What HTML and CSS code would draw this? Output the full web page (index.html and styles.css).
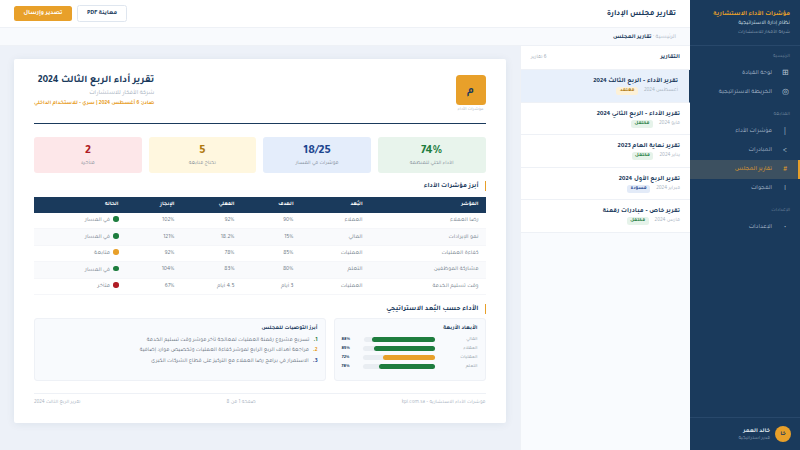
FILE: index.html
```html
<!DOCTYPE html>
<html lang="ar" dir="rtl">
<head>
<meta charset="utf-8">
<title>تقارير مجلس الإدارة</title>
<link rel="stylesheet" href="styles.css">
</head>
<body>
<div class="app">
  <aside class="sidebar">
    <div class="brand">
      <div class="brand-title">مؤشرات الأداء الاستشارية</div>
      <div class="brand-sub">نظام إدارة الاستراتيجية</div>
      <div class="brand-org">شركة الأفكار للاستشارات</div>
    </div>
    <nav class="nav">
      <div class="nav-label">الرئيسية</div>
      <a class="nav-item"><span class="nav-icon">⊞</span>لوحة القيادة</a>
      <a class="nav-item"><span class="nav-icon">◎</span>الخريطة الاستراتيجية</a>
      <div class="nav-label">المتابعة</div>
      <a class="nav-item"><span class="nav-icon">|</span>مؤشرات الأداء</a>
      <a class="nav-item"><span class="nav-icon">&lt;</span>المبادرات</a>
      <a class="nav-item active"><span class="nav-icon">#</span>تقارير المجلس</a>
      <a class="nav-item"><span class="nav-icon">!</span>الفجوات</a>
      <div class="nav-label">الإعدادات</div>
      <a class="nav-item"><span class="nav-icon">•</span>الإعدادات</a>
    </nav>
    <div class="user">
      <div class="avatar">خا</div>
      <div>
        <div class="user-name">خالد العمر</div>
        <div class="user-role">مدير استراتيجية</div>
      </div>
    </div>
  </aside>

  <div class="workspace">
    <header class="topbar">
      <h1 class="page-title">تقارير مجلس الإدارة</h1>
      <div class="actions">
        <button class="btn btn-ghost">معاينة PDF</button>
        <button class="btn btn-gold">تصدير وإرسال</button>
      </div>
    </header>
    <div class="crumbs"><span class="crumb-muted">الرئيسية · </span><b>تقارير المجلس</b></div>

    <div class="columns">
      <section class="list">
        <div class="list-head"><b>التقارير</b><span>6 تقارير</span></div>
        <article class="report selected">
          <div class="report-title">تقرير الأداء – الربع الثالث 2024</div>
          <div class="report-meta"><span>أغسطس 2024</span><i class="tag tag-gold">معتمد</i></div>
        </article>
        <article class="report">
          <div class="report-title">تقرير الأداء – الربع الثاني 2024</div>
          <div class="report-meta"><span>مايو 2024</span><i class="tag tag-green">مكتمل</i></div>
        </article>
        <article class="report">
          <div class="report-title">تقرير نهاية العام 2023</div>
          <div class="report-meta"><span>يناير 2024</span><i class="tag tag-green">مكتمل</i></div>
        </article>
        <article class="report">
          <div class="report-title">تقرير الربع الأول 2024</div>
          <div class="report-meta"><span>فبراير 2024</span><i class="tag tag-blue">مسودة</i></div>
        </article>
        <article class="report">
          <div class="report-title">تقرير خاص – مبادرات رقمنة</div>
          <div class="report-meta"><span>مارس 2024</span><i class="tag tag-green">مكتمل</i></div>
        </article>
      </section>

      <main class="stage">
        <div class="paper">
          <div class="paper-head">
            <div class="logo-wrap">
              <div class="logo">م</div>
              <div class="logo-cap">مؤشرات الأداء</div>
            </div>
            <div class="paper-info">
              <h2 class="paper-title">تقرير أداء الربع الثالث 2024</h2>
              <div class="paper-org">شركة الأفكار للاستشارات</div>
              <div class="paper-date">صادر: 6 أغسطس 2024 | سري - للاستخدام الداخلي</div>
            </div>
          </div>

          <div class="kpis">
            <div class="kpi kpi-green"><strong>74%</strong><span>الأداء الكلي للمنظمة</span></div>
            <div class="kpi kpi-blue"><strong>18/25</strong><span>مؤشرات في المسار</span></div>
            <div class="kpi kpi-yellow"><strong>5</strong><span>تحتاج متابعة</span></div>
            <div class="kpi kpi-red"><strong>2</strong><span>متأخرة</span></div>
          </div>

          <h3 class="section-title">أبرز مؤشرات الأداء</h3>
          <table class="table">
            <colgroup><col class="c1"><col class="c2"><col class="c3"><col class="c4"><col class="c5"><col class="c6"></colgroup>
            <thead><tr><th>المؤشر</th><th>البُعد</th><th>الهدف</th><th>الفعلي</th><th>الإنجاز</th><th>الحالة</th></tr></thead>
            <tbody>
              <tr><td>رضا العملاء</td><td>العملاء</td><td>90%</td><td>92%</td><td>102%</td><td><i class="dot dot-green"></i>في المسار</td></tr>
              <tr><td>نمو الإيرادات</td><td>المالي</td><td>15%</td><td>18.2%</td><td>121%</td><td><i class="dot dot-green"></i>في المسار</td></tr>
              <tr><td>كفاءة العمليات</td><td>العمليات</td><td>85%</td><td>78%</td><td>92%</td><td><i class="dot dot-gold"></i>متابعة</td></tr>
              <tr><td>مشاركة الموظفين</td><td>التعلم</td><td>80%</td><td>83%</td><td>104%</td><td><i class="dot dot-green"></i>في المسار</td></tr>
              <tr><td>وقت تسليم الخدمة</td><td>العمليات</td><td>3 أيام</td><td>4.5 أيام</td><td>67%</td><td><i class="dot dot-red"></i>متأخر</td></tr>
            </tbody>
          </table>

          <h3 class="section-title second">الأداء حسب البُعد الاستراتيجي</h3>
          <div class="panels">
            <div class="panel panel-bars">
              <h4>الأبعاد الأربعة</h4>
              <div class="bar-row"><span class="bar-name">المالي</span><div class="track"><div class="fill fill-green" style="width:88%"></div></div><b>88%</b></div>
              <div class="bar-row"><span class="bar-name">العملاء</span><div class="track"><div class="fill fill-green" style="width:85%"></div></div><b>85%</b></div>
              <div class="bar-row"><span class="bar-name">العمليات</span><div class="track"><div class="fill fill-gold" style="width:72%"></div></div><b>72%</b></div>
              <div class="bar-row"><span class="bar-name">التعلم</span><div class="track"><div class="fill fill-green" style="width:78%"></div></div><b>78%</b></div>
            </div>
            <div class="panel panel-recs">
              <h4>أبرز التوصيات للمجلس</h4>
              <div class="rec"><b class="n-green">1.</b><span>تسريع مشروع رقمنة العمليات لمعالجة تأخر مؤشر وقت تسليم الخدمة</span></div>
              <div class="rec"><b class="n-gold">2.</b><span>مراجعة أهداف الربع الرابع لمؤشر كفاءة العمليات وتخصيص موارد إضافية</span></div>
              <div class="rec"><b class="n-navy">3.</b><span>الاستمرار في برامج رضا العملاء مع التركيز على قطاع الشركات الكبرى</span></div>
            </div>
          </div>

          <div class="paper-foot">
            <span>مؤشرات الأداء الاستشارية – kpi.com.sa</span>
            <span>صفحة 1 من 8</span>
            <span>تقرير الربع الثالث 2024</span>
          </div>
        </div>
      </main>
    </div>
  </div>
</div>
</body>
</html>
```
FILE: styles.css
```css
* { box-sizing: border-box; margin: 0; padding: 0; }
html, body { width: 800px; height: 450px; overflow: hidden; }
body { font-family: "Tajawal", "Noto Sans", sans-serif; color: #1a3a5c; background: #edf1f8; }
.app { display: flex; width: 800px; height: 450px; }

.sidebar { width: 110px; flex: none; background: #1a3a5c; display: flex; flex-direction: column; color: #a9b9cb; }
.brand { height: 46px; padding: 8.5px 10px 0; border-bottom: 1px solid #28486b; }
.brand-title { font-size: 6.5px; line-height: 10px; font-weight: 700; color: #e8a02a; }
.brand-sub { font-size: 5.6px; line-height: 9.5px; color: #dfe6ee; }
.brand-org { font-size: 5px; line-height: 9px; color: #8fa3b9; }
.nav { flex: 1; display: flex; flex-direction: column; }
.nav-label { font-size: 5px; height: 14px; line-height: 14px; padding: 0 10px; color: #71889f; margin-top: 4px; }
.nav-item + .nav-label { margin-top: 6px; }
.nav-item { height: 19px; display: flex; align-items: center; gap: 8px; padding: 0 10px 0 0; font-size: 6.25px; color: #a9b9cb; }
.nav-icon { width: 10px; text-align: center; font-size: 7.5px; color: #b6c4d3; direction: ltr; unicode-bidi: isolate; }
.active { background: #3c5060; color: #e8a02a; border-right: 2px solid #e8a02a; padding-right: 8px; }
.active .nav-icon { color: #e8a02a; }
.user { height: 33px; border-top: 1px solid #28486b; display: flex; align-items: center; gap: 5px; padding: 0 9px; }
.avatar { width: 16px; height: 16px; border-radius: 50%; background: #e8a02a; color: #1a3a5c; font-size: 6px; font-weight: 700; display: flex; align-items: center; justify-content: center; }
.user-name { font-size: 6px; line-height: 8px; font-weight: 700; color: #dfe6ee; }
.user-role { font-size: 5px; line-height: 7px; color: #8fa3b9; }

.workspace { flex: 1; display: flex; flex-direction: column; min-width: 0; }
.topbar { height: 28px; background: #fff; border-bottom: 1px solid #eef1f6; display: flex; align-items: center; justify-content: space-between; padding: 0 14px; }
.page-title { font-size: 8px; font-weight: 700; color: #1a3a5c; }
.actions { display: flex; align-items: center; gap: 5px; }
.btn { font-family: inherit; font-size: 6.25px; font-weight: 700; border-radius: 2.5px; display: flex; align-items: center; justify-content: center; }
.btn-ghost { width: 50px; height: 17px; background: #fff; border: 1px solid #dfe6ef; color: #1a3a5c; }
.btn-gold { width: 58px; height: 15px; background: #e8a02a; border: 0; color: #fff; }
.crumbs { height: 18px; background: #f8fafd; border-bottom: 1px solid #eef1f6; padding: 2px 14px 0; display: flex; align-items: center; font-size: 6px; color: #1a3a5c; }
.crumbs b { font-weight: 700; }
.crumb-muted { color: #a5b0bd; white-space: pre; }

.columns { flex: 1; display: flex; min-height: 0; }
.list { width: 170px; flex: none; background: #f9fbfe; border-left: 1px solid #eef1f6; }
.list-head { height: 24px; background: #fff; border-bottom: 1px solid #eef1f6; display: flex; align-items: center; justify-content: space-between; padding: 0 10px; font-size: 6.25px; }
.list-head span { font-size: 5.3px; color: #98a4b2; }
.report { height: 32.5px; padding: 6px 10px 0; background: #fff; border-bottom: 1px solid #eef1f6; }
.report.selected { background: #e8f0fb; border-right: 1.5px solid #1a3a5c; padding-right: 11px; }
.report-title { font-size: 6.6px; line-height: 10px; font-weight: 700; color: #1a3a5c; }
.report-meta { display: flex; align-items: center; gap: 6px; margin-top: 1px; font-size: 5.3px; color: #a5b0bd; }
.tag { font-style: normal; font-size: 5px; font-weight: 700; line-height: 8px; padding: 0 3.5px; border-radius: 2.5px; }
.tag-gold { background: #fdf1d7; color: #b07a10; }
.tag-green { background: #e6f3ea; color: #1e7d3e; }
.tag-blue { background: #e3ebf8; color: #1d4690; }

.stage { flex: 1; padding: 13px 14.5px 0 14px; min-width: 0; }
.paper { background: #fff; border-radius: 2px; height: 364px; padding: 16px 20px 0; box-shadow: 0 1px 8px rgba(26,58,92,.08); }
.paper-head { height: 49px; border-bottom: 1.2px solid #1a3a5c; display: flex; justify-content: space-between; }
.logo-wrap { width: 30px; }
.logo { width: 30px; height: 30px; border-radius: 3.5px; background: #e8a02a; color: #1a3a5c; font-size: 11.25px; font-weight: 700; display: flex; align-items: center; justify-content: center; padding-top: 2px; }
.logo-cap { font-size: 4.4px; color: #a5b0bd; text-align: center; margin-top: 2px; white-space: nowrap; }
.paper-title { font-size: 10.1px; line-height: 14px; font-weight: 700; color: #1a3a5c; margin-top: -1px; }
.paper-org { font-size: 6.25px; line-height: 10px; color: #a5b0bd; }
.paper-date { font-size: 5.5px; line-height: 10px; font-weight: 700; color: #e8a02a; }

.kpis { display: grid; grid-template-columns: repeat(4, 1fr); gap: 7px; margin-top: 13px; }
.kpi { height: 36px; border-radius: 3px; display: flex; flex-direction: column; align-items: center; justify-content: center; gap: 2px; padding-top: 1px; }
.kpi strong { font-size: 12.5px; line-height: 14px; font-weight: 700; }
.kpi span { font-size: 5.3px; line-height: 8px; color: #7b8794; }
.kpi-green { background: #e8f4ec; } .kpi-green strong { color: #1e7d3e; }
.kpi-blue { background: #e4edfb; } .kpi-blue strong { color: #1d4690; }
.kpi-yellow { background: #fff7df; } .kpi-yellow strong { color: #b07a10; }
.kpi-red { background: #fde7e9; } .kpi-red strong { color: #b01c25; }

.section-title { font-size: 6.75px; line-height: 10px; font-weight: 700; color: #1a3a5c; border-right: 1.5px solid #e8a02a; padding-right: 6px; margin-top: 8px; }
.section-title.second { font-size: 7px; margin-top: 9px; }

.table { width: 100%; table-layout: fixed; border-collapse: collapse; margin-top: 5.5px; font-size: 5.9px; }
.c1 { width: 116px; } .c2 { width: 69px; } .c3 { width: 59px; } .c4 { width: 60px; } .c5 { width: 56px; }
.table th { height: 16px; background: #1a3a5c; color: #fff; font-size: 5.3px; font-weight: 700; text-align: right; padding: 0 7px; }
.table td { height: 16.4px; padding: 0 7px; color: #6c7986; border-bottom: 1px solid #f5f6f9; }
.table tbody tr:nth-child(even) td { background: #f9fafc; }
.dot { display: inline-block; width: 5.5px; height: 5.5px; border-radius: 50%; margin-left: 3px; vertical-align: -0.5px; }
.dot-green { background: #1e7d3e; } .dot-gold { background: #e8a02a; } .dot-red { background: #b01c25; }

.panels { display: flex; gap: 8px; margin-top: 4px; }
.panel { height: 63px; background: #f8fafd; border: 1px solid #eef1f6; border-radius: 3px; padding: 5px 7px 0; }
.panel h4 { font-size: 5.6px; line-height: 9px; font-weight: 700; color: #1a3a5c; }
.panel-bars { width: 152px; flex: none; }
.panel-recs { flex: 1; }
.panel-bars h4 { margin-bottom: 2px; }
.bar-row { display: flex; align-items: center; height: 9.1px; font-size: 4.7px; }
.bar-name { width: 43px; color: #8a96a3; }
.track { width: 71.5px; height: 5px; border-radius: 2.5px; background: #e9edf2; }
.fill { height: 5px; border-radius: 2.5px; }
.fill-green { background: #1e7d3e; } .fill-gold { background: #e8a02a; }
.bar-row b { margin-right: 13.5px; color: #1a3a5c; font-weight: 700; }
.panel-recs h4 { margin-bottom: 2px; }
.rec { display: flex; gap: 4px; height: 10.5px; align-items: center; font-size: 5.7px; color: #5e6b78; }
.n-green { color: #1e7d3e; } .n-gold { color: #e8a02a; } .n-navy { color: #1d4690; }

.paper-foot { margin-top: 12px; border-top: 1px solid #eef1f6; padding-top: 6px; display: flex; justify-content: space-between; font-size: 5.2px; color: #a5b0bd; }
```
